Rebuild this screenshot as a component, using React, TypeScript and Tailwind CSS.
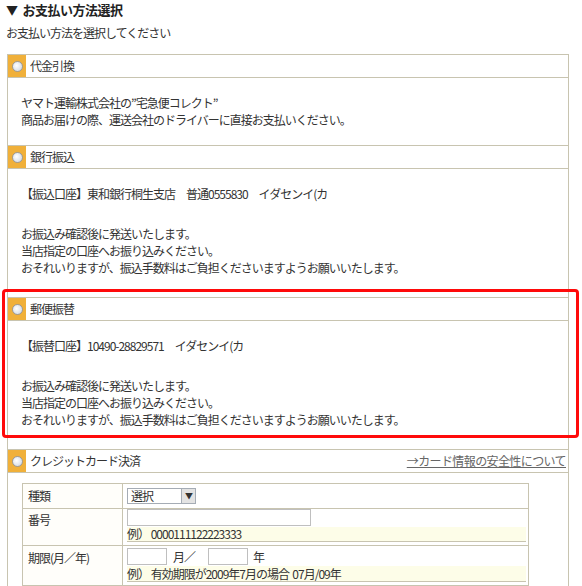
import React from 'react';

const Radio = () => (
  <div className="w-[18px] self-stretch bg-[#f0b03a] flex items-center justify-center">
    <span className="w-[11px] h-[11px] rounded-full border border-[#9a9a9a] bg-[radial-gradient(circle_at_40%_40%,#ffffff,#c9d2de)]" />
  </div>
);

function Header({ label, right }: { label: string; right?: React.ReactNode }) {
  return (
    <div className="h-[24px] flex border-y border-[#c8c4b0] bg-white">
      <Radio />
      <div className="flex-1 flex items-center justify-between pl-[4px] pr-[2px]">
        <span>{label}</span>
        {right}
      </div>
    </div>
  );
}

function TransferBody({ account }: { account: string }) {
  return (
    <div className="pl-[13px] pt-[16px] pb-[21px] leading-[17px]">
      <p>{account}</p>
      <div className="mt-[23px]">
        <p>お振込み確認後に発送いたします。</p>
        <p>当店指定の口座へお振り込みください。</p>
        <p>おそれいりますが、振込手数料はご負担くださいますようお願いいたします。</p>
      </div>
    </div>
  );
}

export default function App() {
  return (
    <div className="relative w-[582px] h-[586px] overflow-hidden bg-white text-[#333] text-[12px] tracking-[-1px] font-['Noto_Sans_CJK_JP','Noto_Sans_CJK_SC',sans-serif]">
      <h2 className="pl-[6px] pt-[1px] text-[13px] leading-[18px] font-bold text-[#222] tracking-[-0.5px] flex items-center">
        <span className="text-[12px]">▼</span>
        <span className="ml-[5px]">お支払い方法選択</span>
      </h2>
      <p className="pl-[6px] mt-[5px] leading-[18px]">お支払い方法を選択してください</p>

      <div className="ml-[7px] mt-[12px] w-[562px] border-x border-[#c8c4b0]">
        <Header label="代金引換" />
        <div className="pl-[13px] pt-[16px] pb-[17px] leading-[17px]">
          <p>ヤマト運輸株式会社の”宅急便コレクト”</p>
          <p>商品お届けの際、運送会社のドライバーに直接お支払いください。</p>
        </div>

        <Header label="銀行振込" />
        <TransferBody account="【振込口座】東和銀行桐生支店　普通0555830　イダセンイ(カ" />

        <Header label="郵便振替" />
        <TransferBody account="【振替口座】10490-28829571　イダセンイ(カ" />

        <Header
          label="クレジットカード決済"
          right={<a className="text-[#666] underline tracking-[-0.6px]">→カード情報の安全性について</a>}
        />
        <div className="pl-[14px] pt-[10px]">
          <div className="w-[507px] border-x border-t border-[#c8c4b0]">
            <div className="flex h-[25px] border-b border-[#c8c4b0]">
              <div className="w-[100px] border-r border-[#c8c4b0] bg-[#fffefa] pl-[5px] flex items-center">種類</div>
              <div className="flex-1 pl-[4px] flex items-center">
                <div className="w-[69px] h-[16px] border border-[#a5acb5] bg-white flex items-center">
                  <span className="flex-1 pl-[3px] leading-none">選択</span>
                  <span className="w-[14px] h-[14px] bg-[#e3e3e3] border-l border-[#a5acb5] flex items-center justify-center text-[8px] text-[#333]">▼</span>
                </div>
              </div>
            </div>
            <div className="flex h-[37px] border-b border-[#c8c4b0]">
              <div className="w-[100px] border-r border-[#c8c4b0] bg-[#fffefa] pl-[5px] pt-[2px] leading-[17px]">番号</div>
              <div className="flex-1 pl-[4px] flex flex-col">
                <div className="w-[184px] h-[17px] border border-[#bfbfbf] bg-white" />
                <div className="mt-[1px] mr-[2px] h-[15px] bg-[#fdfde8] border-b border-[#c8c4b0] flex items-center leading-none">例）&nbsp;0000111122223333</div>
              </div>
            </div>
            <div className="flex h-[40px] border-b border-[#c8c4b0]">
              <div className="w-[100px] border-r border-[#c8c4b0] bg-[#fffefa] pl-[5px] pt-[3px] leading-[17px]">期限(月／年)</div>
              <div className="flex-1 pl-[4px] pt-[2px] flex flex-col">
                <div className="flex items-center h-[17px]">
                  <div className="w-[40px] h-[17px] border border-[#bfbfbf] bg-white" />
                  <span className="ml-[6px] w-[35px]">月／</span>
                  <div className="w-[40px] h-[17px] border border-[#bfbfbf] bg-white" />
                  <span className="ml-[5px]">年</span>
                </div>
                <div className="mt-[1px] mr-[2px] h-[16px] bg-[#fdfde8] border-b border-[#c8c4b0] flex items-center leading-none">例）&nbsp;有効期限が2009年7月の場合&nbsp;&nbsp;07月/09年</div>
              </div>
            </div>
          </div>
        </div>
      </div>

      <div className="absolute left-[2px] top-[289px] w-[577px] h-[149px] border-[3px] border-[#ff0a0a] rounded-[4px]" />
    </div>
  );
}
